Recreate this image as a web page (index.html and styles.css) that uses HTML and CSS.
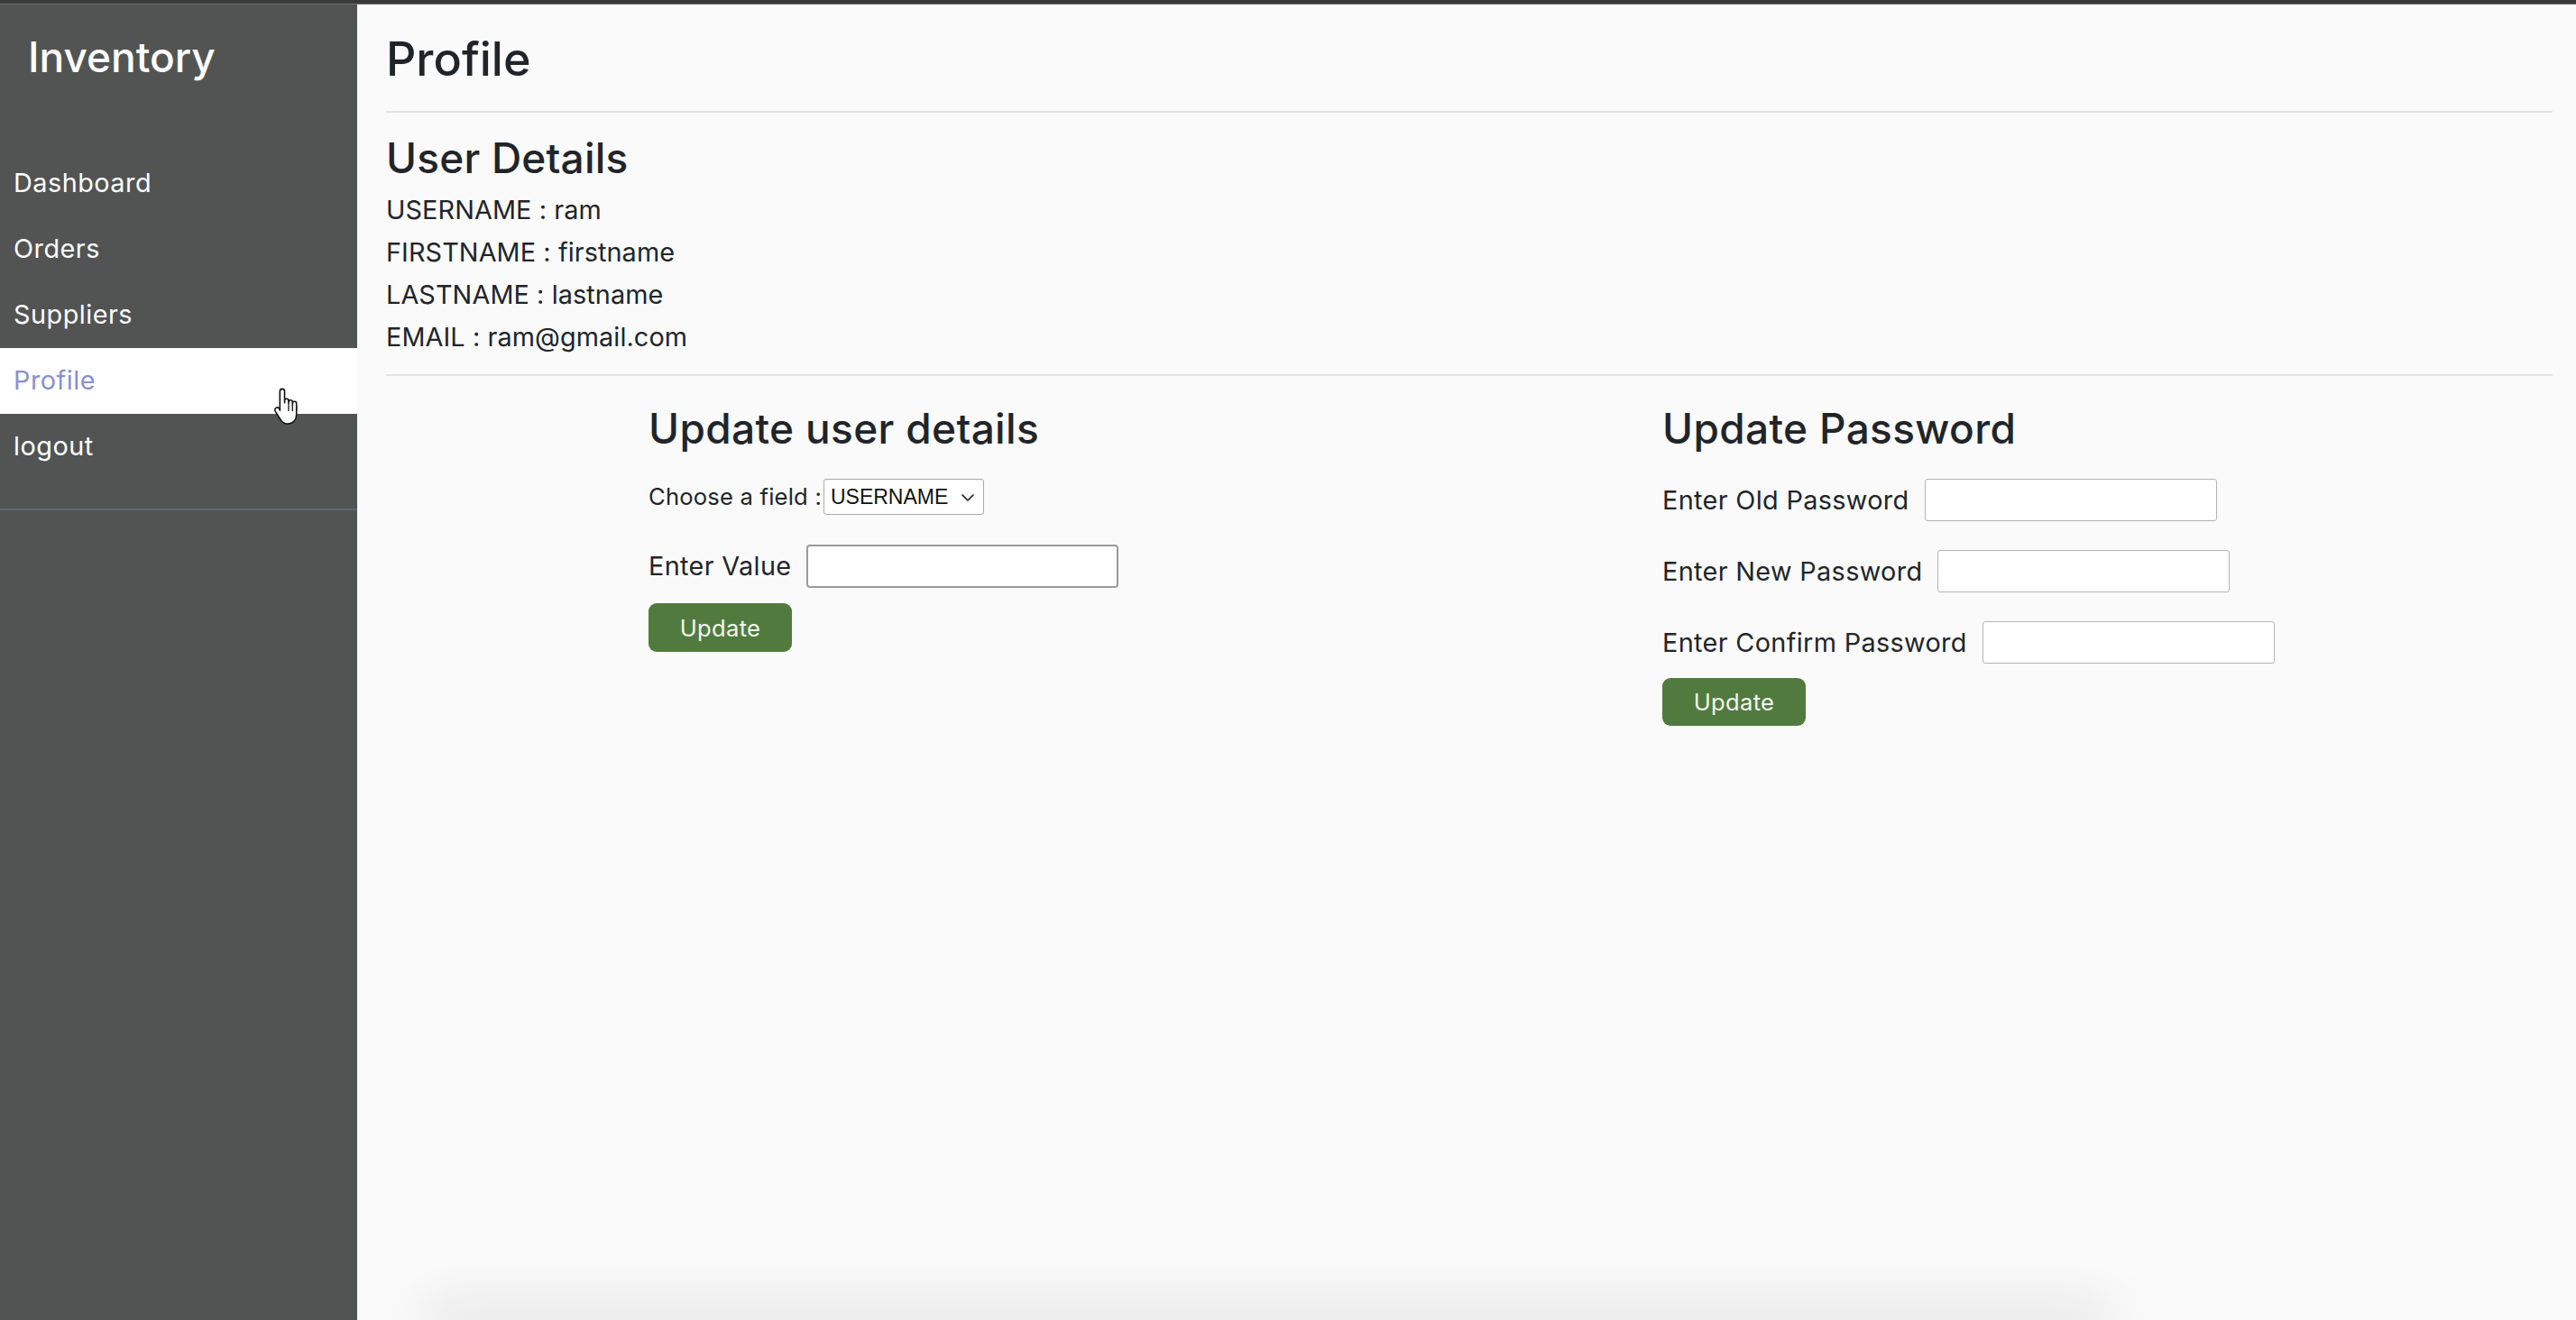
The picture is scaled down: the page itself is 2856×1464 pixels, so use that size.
FILE: index.html
```html
<!DOCTYPE html>
<html lang="en">
<head>
<meta charset="utf-8">
<title>Inventory - Profile</title>
<link rel="stylesheet" href="styles.css">
</head>
<body>
<div class="topbar"></div>
<div class="layout">
  <aside class="sidebar">
    <div class="brand">Inventory</div>
    <nav class="nav">
      <a class="nav-item" href="#">Dashboard</a>
      <a class="nav-item" href="#">Orders</a>
      <a class="nav-item" href="#">Suppliers</a>
      <a class="nav-item active" href="#">Profile</a>
      <a class="nav-item" href="#">logout</a>
    </nav>
    <div class="side-divider"></div>
  </aside>
  <main class="main">
    <h1 class="page-title">Profile</h1>
    <hr class="rule rule-top">
    <h2 class="section-title">User Details</h2>
    <div class="details">
      <p>USERNAME : ram</p>
      <p>FIRSTNAME : firstname</p>
      <p>LASTNAME : lastname</p>
      <p>EMAIL : ram@gmail.com</p>
    </div>
    <hr class="rule rule-mid">
    <div class="forms">
      <form class="form form-user">
        <h2 class="form-title">Update user details</h2>
        <div class="row row-choose">
          <label class="label-small">Choose a field :</label><span class="select-wrap"><select class="field-select"><option>USERNAME</option><option>FIRSTNAME</option><option>LASTNAME</option><option>EMAIL</option></select><svg class="select-chevron" viewBox="0 0 14 8" width="14" height="8" aria-hidden="true"><path d="M1 1l6 6 6-6" fill="none" stroke="#222" stroke-width="1.7" stroke-linecap="round" stroke-linejoin="round"/></svg></span>
        </div>
        <div class="row row-value">
          <label class="label">Enter Value</label>
          <input class="input input-value" type="text">
        </div>
        <button class="btn" type="button">Update</button>
      </form>
      <form class="form form-pass">
        <h2 class="form-title">Update Password</h2>
        <div class="row row-pass">
          <label class="label">Enter Old Password</label>
          <input class="input input-pass" type="password">
        </div>
        <div class="row row-pass">
          <label class="label">Enter New Password</label>
          <input class="input input-pass" type="password">
        </div>
        <div class="row row-pass">
          <label class="label">Enter Confirm Password</label>
          <input class="input input-pass" type="password">
        </div>
        <button class="btn btn-pass" type="button">Update</button>
      </form>
    </div>
    <div class="below-card"></div>
  </main>
</div>
<svg class="cursor" viewBox="0 0 24 32" width="35" height="47" aria-hidden="true">
  <path d="M7.5 1.5c1 0 1.8.8 1.8 1.8V12V10.5c0-.9.7-1.5 1.5-1.5s1.5.6 1.5 1.5V13V11.5c0-.9.7-1.5 1.5-1.5s1.5.6 1.5 1.5V14V12.5c0-.9.7-1.5 1.5-1.5s1.5.6 1.5 1.5V21c0 4-2.5 7-6.5 7H11.5c-2.5 0-4-1.2-5.3-3.2L2.2 18.5c-.6-1-.3-2.1.6-2.6.9-.5 1.9-.2 2.5.6l.4 1.3V3.3c0-1 .8-1.8 1.8-1.8z" fill="#fff" stroke="#111" stroke-width="1.1" stroke-linejoin="round"/>
  <path d="M12.3 14v4M15.3 14.5v3.5M18.3 15v3" stroke="#111" stroke-width="0.9" stroke-linecap="round"/>
</svg>
</body>
</html>
```

FILE: styles.css
```css
* { box-sizing: border-box; }
html, body { margin: 0; padding: 0; }
body {
  font-family: Inter, "Noto Sans", sans-serif;
  color: #212529;
  background: #fafafa;
  height: 100vh;
  overflow: hidden;
}
.topbar {
  height: 5px;
  background: #3a3a3a;
  border-bottom: 1px solid #6c6c6c;
}
.layout {
  display: flex;
  height: calc(100vh - 5px);
}
.sidebar {
  width: 396px;
  flex-shrink: 0;
  background: #525453;
  color: #fff;
}
.brand {
  margin: 28px 0 0 31px;
  font-size: 46px;
  line-height: 60px;
  font-weight: 500;
  color: #fff;
}
.nav {
  display: flex;
  flex-direction: column;
  margin-top: 74px;
}
.nav-item {
  display: block;
  padding: 14px 15px 16px;
  font-size: 28.8px;
  line-height: 43px;
  letter-spacing: 0.5px;
  color: #fff;
  text-decoration: none;
}
.nav-item.active {
  background: #fff;
  color: #8890cf;
}
.side-divider {
  margin-top: 32px;
  height: 2px;
  background: #5b6570;
}
.main {
  flex: 1;
  display: flex;
  flex-direction: column;
  padding: 0 26px 0 32px;
  overflow: hidden;
}
.page-title {
  margin: 30px 0 0;
  font-size: 52px;
  line-height: 62px;
  font-weight: 500;
}
.rule {
  border: 0;
  height: 2px;
  background: #e3e3e3;
  margin: 0;
  width: 100%;
}
.rule-top { margin-top: 26px; }
.section-title {
  margin: 22px 0 0;
  font-size: 46px;
  line-height: 56px;
  font-weight: 500;
  letter-spacing: 0.2px;
}
.details { margin-top: 6px; }
.details p {
  margin: 0;
  font-size: 28.8px;
  line-height: 47px;
  letter-spacing: 0.1px;
}
.rule-mid { margin-top: 18px; }
.forms {
  display: flex;
  justify-content: space-around;
  margin-top: 30px;
}
.form { margin: 0; }
.form-user { width: 542px; }
.form-pass { width: 696px; }
.form-title {
  margin: 0;
  font-size: 46px;
  line-height: 56px;
  font-weight: 500;
  letter-spacing: 0.35px;
  white-space: nowrap;
}
.row {
  display: flex;
  align-items: center;
}
.row-choose { margin-top: 28px; height: 40px; }
.row-value { margin-top: 33px; }
.row-pass { margin-top: 32px; }
.form-pass .form-title + .row-pass { margin-top: 28px; }
.label {
  font-size: 28.8px;
  line-height: 40px;
  letter-spacing: 0.35px;
  margin-right: 17px;
  white-space: nowrap;
}
.label-small {
  font-size: 25.6px;
  line-height: 40px;
  letter-spacing: 0.2px;
  margin-right: 2px;
  white-space: nowrap;
}
.select-wrap {
  position: relative;
  display: inline-flex;
}
.field-select {
  -webkit-appearance: none;
  appearance: none;
  width: 178px;
  height: 40px;
  font-family: "Liberation Sans", Arial, sans-serif;
  font-size: 23px;
  color: #111;
  background: #fff;
  border: 1px solid #a9a9a9;
  border-radius: 3px;
  padding: 0 30px 0 7px;
  margin: 0;
}
.select-chevron {
  position: absolute;
  right: 11px;
  top: 17px;
  pointer-events: none;
}
.input {
  background: #fff;
  font-size: 24px;
  padding: 0 6px;
}
.input-value {
  width: 346px;
  height: 48px;
  border: 2px solid #9a9a9a;
  border-radius: 4px;
}
.input-pass {
  width: 324px;
  height: 47px;
  border: 1.5px solid #b4b4b4;
  border-radius: 3px;
}
.btn {
  margin-top: 17px;
  width: 159px;
  height: 54px;
  border: 0;
  border-radius: 9px;
  background: #517b3e;
  color: #f5f5f0;
  font-family: Inter, "Noto Sans", sans-serif;
  font-size: 25.6px;
  font-weight: 400;
  letter-spacing: 0.3px;
  display: block;
}
.btn-pass { margin-top: 16px; height: 53px; }
.below-card {
  margin: auto 510px 0 62px;
  height: 0;
  flex-shrink: 0;
  box-shadow: 0 0 60px 20px rgba(0, 0, 0, 0.1);
}
.cursor {
  position: absolute;
  left: 302px;
  top: 429px;
}
```
